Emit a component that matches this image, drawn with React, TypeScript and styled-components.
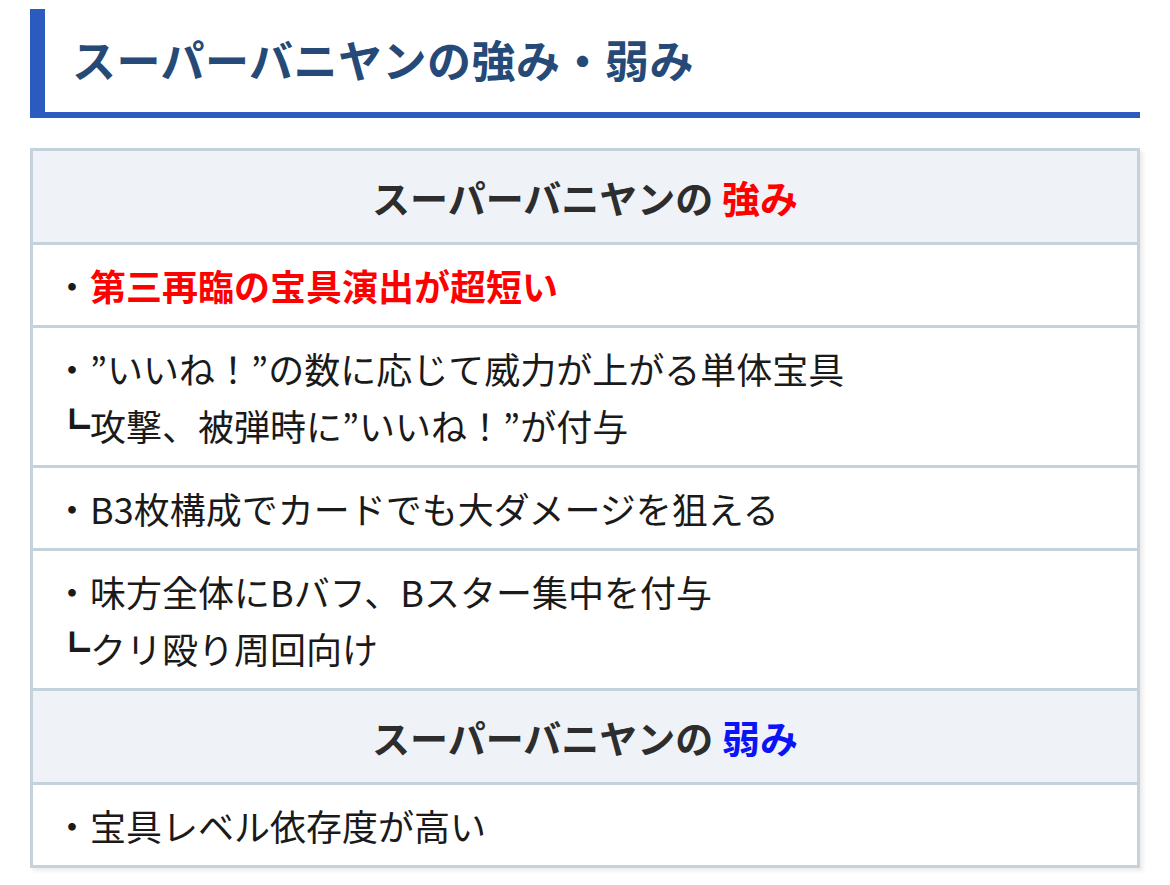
import styled, { createGlobalStyle } from "styled-components";

const GlobalStyle = createGlobalStyle`
  body {
    margin: 0;
    background: #ffffff;
    font-family: "Noto Sans CJK JP", "Noto Sans", sans-serif;
  }
`;

type Item = { lines: string[]; red?: boolean };

const strengths: Item[] = [
  { lines: ["第三再臨の宝具演出が超短い"], red: true },
  { lines: ["”いいね！”の数に応じて威力が上がる単体宝具", "┗攻撃、被弾時に”いいね！”が付与"] },
  { lines: ["B3枚構成でカードでも大ダメージを狙える"] },
  { lines: ["味方全体にBバフ、Bスター集中を付与", "┗クリ殴り周回向け"] },
];

const weaknesses: Item[] = [{ lines: ["宝具レベル依存度が高い"] }];

export default function App() {
  const renderRows = (items: Item[]) =>
    items.map((item, index) => (
      <Row key={index}>
        {item.lines.map((line, i) => (
          <Line key={i} $red={i === 0 && item.red}>
            {i === 0 ? (
              <>
                <Dot>・</Dot>
                {line}
              </>
            ) : (
              line
            )}
          </Line>
        ))}
      </Row>
    ));

  return (
    <>
      <GlobalStyle />
      <Page>
        <Title>スーパーバニヤンの強み・弱み</Title>
        <Board>
          <HeadRow>
            スーパーバニヤンの <Accent $color="#ff0000">強み</Accent>
          </HeadRow>
          {renderRows(strengths)}
          <HeadRow>
            スーパーバニヤンの <Accent $color="#0a14f5">弱み</Accent>
          </HeadRow>
          {renderRows(weaknesses)}
        </Board>
      </Page>
    </>
  );
}

const Page = styled.div`
  padding: 9px 30px 20px;
  display: flex;
  flex-direction: column;
  gap: 30px;
`;

const Title = styled.h2`
  margin: 0;
  padding: 17px 0 20px 27px;
  border-left: 15px solid #2c5bbf;
  border-bottom: 6px solid #2c5bbf;
  color: #264a77;
  font-size: 44px;
  font-weight: 700;
  line-height: 66px;
  letter-spacing: 0.5px;
`;

const Board = styled.div`
  border: 3px solid #c3d2db;
  box-shadow: 3px 3px 4px rgba(0, 0, 0, 0.08);
  display: flex;
  flex-direction: column;
`;

const HeadRow = styled.div`
  background: #eff3f8;
  padding: 17px 20px;
  text-align: center;
  font-size: 38px;
  font-weight: 700;
  line-height: 57px;
  color: #2d2d2d;
  border-bottom: 3px solid #c3d2db;
`;

const Accent = styled.span<{ $color: string }>`
  color: ${(p) => p.$color};
`;

const Row = styled.div`
  padding: 12px 20px 11px 21px;
  border-bottom: 3px solid #c3d2db;
  background: #ffffff;

  &:last-child {
    border-bottom: none;
  }
`;

const Line = styled.div<{ $red?: boolean }>`
  font-size: 36px;
  line-height: 57px;
  color: ${(p) => (p.$red ? "#ff0000" : "#1a1a1a")};
  font-weight: ${(p) => (p.$red ? 700 : 400)};
`;

const Dot = styled.span`
  color: #1a1a1a;
  font-weight: 400;
`;
